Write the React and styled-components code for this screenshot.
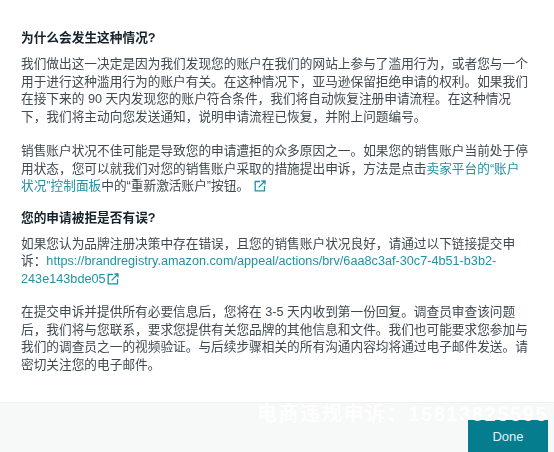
import React from "react";
import styled, { createGlobalStyle } from "styled-components";

const Global = createGlobalStyle`
  html, body {
    margin: 0;
    padding: 0;
    background: #fff;
  }
  body {
    font-family: "Liberation Sans", "Noto Sans CJK SC", sans-serif;
  }
`;

const Page = styled.div`
  position: relative;
  width: 554px;
  height: 452px;
  overflow: hidden;
  display: flex;
  flex-direction: column;
  background: #fff;
`;

const Content = styled.main`
  flex: 1;
  padding: 29px 0 0 21px;
  filter: blur(0.45px);
`;

const Heading = styled.h2`
  margin: 0 0 ${(p) => p.$after || 9}px;
  font-size: 12.7px;
  line-height: 18px;
  font-weight: 700;
  color: #16222a;
`;

const Para = styled.p`
  margin: 0 0 ${(p) => p.$after ?? 16}px;
  font-size: 12.68px;
  line-height: 17.5px;
  color: #3f4a50;
  white-space: nowrap;
`;

const Link = styled.a`
  color: #2391a5;
  text-decoration: none;
`;

const LinkIcon = styled.svg`
  width: 12px;
  height: 12px;
  margin-left: ${(p) => p.$gap || 0}px;
  vertical-align: -2px;
  fill: none;
  stroke: #2391a5;
  stroke-width: 1.3;
`;

const Footer = styled.footer`
  height: 49px;
  flex: none;
  background: #f7f8f8;
  border-top: 1px solid #f0f1f1;
  display: flex;
  justify-content: flex-end;
  align-items: flex-end;
  padding-right: 6px;
`;

const DoneButton = styled.button`
  width: 80px;
  height: 32px;
  border: 0;
  padding: 0;
  background: #067d8f;
  color: #e4f1f3;
  font-family: inherit;
  font-size: 13px;
  cursor: pointer;
`;

const Watermark = styled.div`
  position: absolute;
  left: 257px;
  top: 402px;
  font-size: 20px;
  line-height: 24px;
  font-weight: 700;
  letter-spacing: 1.6px;
  color: rgba(255, 255, 255, 0.92);
  white-space: nowrap;
`;

function ExternalIcon({ gap }) {
  return (
    <LinkIcon viewBox="0 0 12 12" $gap={gap}>
      <path d="M6 1.5H1.2v9.3h9.3V6" />
      <path d="M4.6 7.4 10.8 1.2M7.4 1h3.6v3.6" />
    </LinkIcon>
  );
}

export default function App() {
  return (
    <Page>
      <Global />
      <Content>
        <Heading>为什么会发生这种情况?</Heading>
        <Para $after={17}>
          我们做出这一决定是因为我们发现您的账户在我们的网站上参与了滥用行为，或者您与一个
          <br />
          用于进行这种滥用行为的账户有关。在这种情况下，亚马逊保留拒绝申请的权利。如果我们
          <br />
          在接下来的 90 天内发现您的账户符合条件，我们将自动恢复注册申请流程。在这种情况
          <br />
          下，我们将主动向您发送通知，说明申请流程已恢复，并附上问题编号。
        </Para>
        <Para $after={13}>
          销售账户状况不佳可能是导致您的申请遭拒的众多原因之一。如果您的销售账户当前处于停
          <br />
          用状态，您可以就我们对您的销售账户采取的措施提出申诉，方法是点击
          <Link href="#seller">卖家平台的“账户</Link>
          <br />
          <Link href="#seller">状况”控制面板</Link>中的“重新激活账户”按钮。
          <ExternalIcon gap={5} />
        </Para>
        <Heading>您的申请被拒是否有误?</Heading>
        <Para>
          如果您认为品牌注册决策中存在错误，且您的销售账户状况良好，请通过以下链接提交申
          <br />
          诉：
          <Link href="#appeal">
            https://brandregistry.amazon.com/appeal/actions/brv/6aa8c3af-30c7-4b51-b3b2-
            <br />
            243e143bde05
            <ExternalIcon gap={1} />
          </Link>
        </Para>
        <Para $after={0}>
          在提交申诉并提供所有必要信息后，您将在 3-5 天内收到第一份回复。调查员审查该问题
          <br />
          后，我们将与您联系，要求您提供有关您品牌的其他信息和文件。我们也可能要求您参加与
          <br />
          我们的调查员之一的视频验证。与后续步骤相关的所有沟通内容均将通过电子邮件发送。请
          <br />
          密切关注您的电子邮件。
        </Para>
      </Content>
      <Footer>
        <DoneButton>Done</DoneButton>
      </Footer>
      <Watermark>电商违规申诉：15813825595</Watermark>
    </Page>
  );
}
